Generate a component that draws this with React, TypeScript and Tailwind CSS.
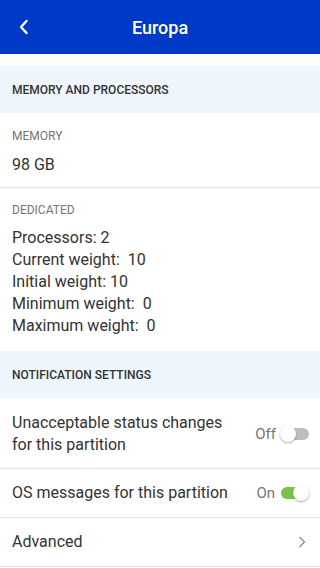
import React from "react";

function Toggle({ on }: { on: boolean }) {
  return (
    <div className="relative w-[29px] h-4 shrink-0">
      <div
        className={
          on
            ? "absolute left-[1px] top-[2px] w-[26px] h-3 rounded-full bg-[#7cc242]"
            : "absolute left-[3px] top-[2px] w-[26px] h-3 rounded-full bg-[#bdbdbd]"
        }
      />
      <div
        className={
          on
            ? "absolute right-0 top-0 w-4 h-4 rounded-full bg-white shadow-[0_1px_2px_rgba(0,0,0,0.35)]"
            : "absolute left-0 top-0 w-4 h-4 rounded-full bg-white shadow-[0_1px_2px_rgba(0,0,0,0.35)]"
        }
      />
    </div>
  );
}

function SectionHeader({ children }: { children: React.ReactNode }) {
  return (
    <div className="h-[47px] bg-[#eef5fd] flex items-center px-3 text-[12px] font-medium text-[#333333]">
      {children}
    </div>
  );
}

export default function App() {
  return (
    <div
      className="w-[320px] h-[568px] bg-white overflow-hidden"
      style={{ fontFamily: "Roboto, 'Noto Sans', sans-serif" }}
    >
      <div className="h-[54px] bg-[#0039c7] relative flex items-center justify-center">
        <svg
          className="absolute left-[18px] top-[19px]"
          width="12"
          height="16"
          viewBox="0 0 12 16"
          fill="none"
        >
          <path d="M8.5 2 L3 8 L8.5 14" stroke="white" strokeWidth="2.4" strokeLinecap="round" strokeLinejoin="round" />
        </svg>
        <div className="text-white text-[18px] font-medium">Europa</div>
      </div>
      <div className="h-3" />
      <SectionHeader>MEMORY AND PROCESSORS</SectionHeader>
      <div className="px-3 pt-[15px] pb-[11px] border-b border-[#e3e3e3]">
        <div className="text-[12px] leading-4 text-[#757575]">MEMORY</div>
        <div className="mt-[10px] text-[16px] leading-[22px] text-[#333333]">98 GB</div>
      </div>
      <div className="px-3 pt-[14px] pb-[14px]">
        <div className="text-[12px] leading-4 text-[#757575]">DEDICATED</div>
        <div className="mt-[9px] text-[16px] leading-[22px] text-[#333333] whitespace-pre">
          <div>Processors: 2</div>
          <div>Current weight:  10</div>
          <div>Initial weight: 10</div>
          <div>Minimum weight:  0</div>
          <div>Maximum weight:  0</div>
        </div>
      </div>
      <SectionHeader>NOTIFICATION SETTINGS</SectionHeader>
      <div className="flex items-center px-3 pt-[14px] pb-[12px] border-b border-[#e3e3e3]">
        <div className="flex-1 text-[16px] leading-[22px] text-[#333333]">
          Unacceptable status changes
          <br />
          for this partition
        </div>
        <div className="flex items-center gap-[4px] mr-[-1px]">
          <span className="text-[15px] text-[#757575]">Off</span>
          <Toggle on={false} />
        </div>
      </div>
      <div className="h-[49px] flex items-center px-3 border-b border-[#e3e3e3]">
        <div className="flex-1 text-[16px] leading-[22px] text-[#333333]">
          OS messages for this partition
        </div>
        <div className="flex items-center gap-[5px] mr-[-1px]">
          <span className="text-[15px] text-[#757575]">On</span>
          <Toggle on={true} />
        </div>
      </div>
      <div className="h-[49px] flex items-center px-3 border-b border-[#e3e3e3]">
        <div className="flex-1 text-[16px] leading-[22px] text-[#333333]">Advanced</div>
        <svg width="8" height="12" viewBox="0 0 8 12" fill="none" className="mr-[2px]">
          <path d="M1.5 1 L6.5 6 L1.5 11" stroke="#8a8a8a" strokeWidth="1.3" />
        </svg>
      </div>
    </div>
  );
}
